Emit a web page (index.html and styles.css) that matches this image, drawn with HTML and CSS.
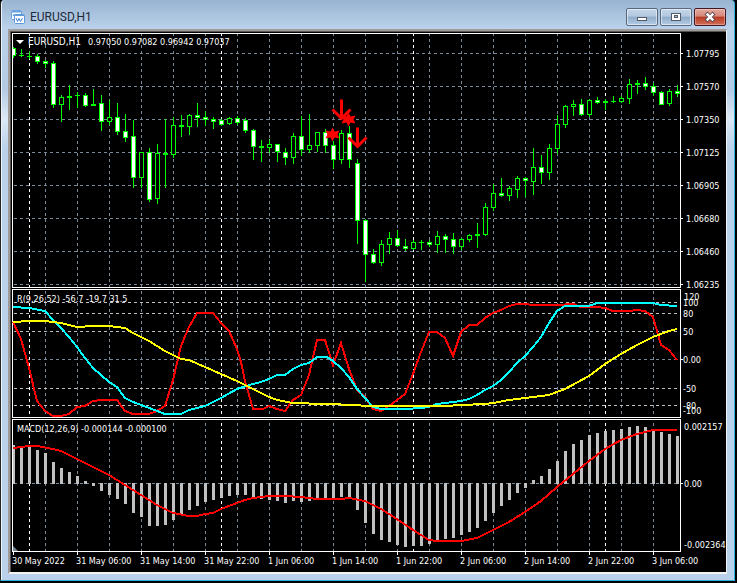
FILE: index.html
```
<!DOCTYPE html>
<html lang="en">
<head>
    <meta charset="UTF-8">
    <meta name="viewport" content="width=device-width, initial-scale=1.0">
    <title>EURUSD,H1</title>
    <link rel="stylesheet" href="styles.css">
</head>
<body>

    <div class="window">
        <header class="titlebar">
            <svg class="app-icon" viewBox="0 0 14 14" width="14" height="14" aria-hidden="true">
                <rect x="0.5" y="0.5" width="10" height="9" rx="1" fill="#f4f9ff" stroke="#6aa3e0"/>
                <path d="M1 1.5h9" stroke="#6aa3e0" stroke-width="2"/>
                <path d="M2 6l1.5-2 1 2" fill="none" stroke="#4a8ad8"/>
                <rect x="3.5" y="4.5" width="10" height="9" rx="1" fill="#fff" stroke="#5b97dc"/>
                <path d="M4 5.5h9" stroke="#5b97dc"/>
                <path d="M5 8l1.5 3.500L8 8.500l1.500 3L11.500 8" fill="none" stroke="#3c7fd2"/>
            </svg>
            <h1 class="title">EURUSD,H1</h1>
            <div class="window-buttons">
                <button type="button" class="win-btn" aria-label="Minimize">
                    <svg viewBox="0 0 12 12" width="12" height="12"><rect x="1.5" y="6.5" width="9" height="3" fill="#fff" stroke="#555c68"/></svg>
                </button>
                <button type="button" class="win-btn" aria-label="Maximize">
                    <svg viewBox="0 0 12 12" width="12" height="12"><rect x="1.5" y="2.5" width="9" height="7" fill="#fff" stroke="#555c68"/><rect x="4.5" y="4.5" width="3" height="2" fill="#9db7d3" stroke="#555c68"/></svg>
                </button>
                <button type="button" class="win-btn close" aria-label="Close">
                    <svg viewBox="0 0 12 12" width="12" height="12"><path d="M2 2l8 8M10 2l-8 8" stroke="#5a4a52" stroke-width="4"/><path d="M2.700 2.700l6.600 6.600M9.300 2.700l-6.600 6.600" stroke="#fff" stroke-width="2.500"/></svg>
                </button>
            </div>
        </header>

        <main class="chart">
            <svg class="pane" viewBox="12 33 714 255">
                <g id="priceGrid"></g>
                <g id="candles"></g>
                <g id="signals"></g>
                <path d="M16 40h8l-4 4z" fill="#fff"/>
                <text class="symbol" x="28" y="45">EURUSD,H1</text>
                <text x="88" y="45">0.97050 0.97082 0.96942 0.97037</text>
                <text x="686" y="57">1.07795</text>
                <text x="686" y="90">1.07570</text>
                <text x="686" y="123">1.07350</text>
                <text x="686" y="156">1.07125</text>
                <text x="686" y="189">1.06905</text>
                <text x="686" y="222">1.06680</text>
                <text x="686" y="255">1.06460</text>
                <text x="686" y="288">1.06235</text>
            </svg>

            <svg class="pane" viewBox="12 289 714 129">
                <g id="rGrid"></g>
                <g id="rLines"></g>
                <text x="17" y="302">R(9,26,52) -56.7 -19.7 31.5</text>
                <text x="684" y="300">120</text>
                <text x="683" y="306">100</text>
                <text x="683" y="317">80</text>
                <text x="683" y="335">50</text>
                <text x="683" y="363">0.00</text>
                <text x="683" y="392">-50</text>
                <text x="683" y="409">-80</text>
                <text x="683" y="414">-100</text>
            </svg>

            <svg class="pane" viewBox="12 419 714 133">
                <g id="macdGrid"></g>
                <g id="macdBars"></g>
                <path d="M13 546l5 5h-5z" fill="#778899"/>
                <text x="17" y="432">MACD(12,26,9) -0.000144 -0.000100</text>
                <text x="684" y="430">0.002157</text>
                <text x="684" y="487">0.00</text>
                <text x="684" y="548">-0.002364</text>
            </svg>

            <ul class="time-axis">
                <li>30 May 2022</li>
                <li>31 May 06:00</li>
                <li>31 May 14:00</li>
                <li>31 May 22:00</li>
                <li>1 Jun 06:00</li>
                <li>1 Jun 14:00</li>
                <li>1 Jun 22:00</li>
                <li>2 Jun 06:00</li>
                <li>2 Jun 14:00</li>
                <li>2 Jun 22:00</li>
                <li>3 Jun 06:00</li>
            </ul>
        </main>
    </div>

    <script src="chart.js"></script>
</body>
</html>
```
FILE: styles.css
```
* {
    box-sizing: border-box;
    margin: 0;
    padding: 0;
}

body {
    background-color: #000;
    font-family: "DejaVu Sans Condensed", "DejaVu Sans", sans-serif;
    padding: 0 2px 2px 0;
}

.window {
    background: linear-gradient(#99b4d1 0, #b9d1ea 28px, #b4cbe6 90px, #dce8f5 118px, #b9d1ea 150px);
    border-left: 1px solid #222;
    border-right: 1px solid #2bb5dc;
    border-bottom: 1px solid #2bb5dc;
    border-radius: 4px 4px 0 0;
    box-shadow: inset 1px 0 0 #eef5fc;
    padding: 0 7px 6px;
}

.titlebar {
    display: flex;
    align-items: center;
    height: 29px;
    padding: 5px 1px 0 3px;
}

.title {
    flex: 1;
    margin-left: 5px;
    font-family: Roboto, sans-serif;
    font-size: 12px;
    font-weight: 400;
    color: #1e2a3a;
}

.window-buttons {
    display: flex;
    gap: 2px;
}

.win-btn {
    display: flex;
    align-items: center;
    justify-content: center;
    width: 32px;
    height: 18px;
    border: 1px solid #59697f;
    border-radius: 2px;
    background: linear-gradient(#c4d6e9 0, #b3c9e0 45%, #8fabc9 50%, #b5cde6 100%);
    box-shadow: inset 0 0 0 1px rgba(255, 255, 255, 0.5);
}

.win-btn.close {
    border-color: #451722;
    background: linear-gradient(#e5a99f 0, #d58879 45%, #b83a22 50%, #d2705a 100%);
    box-shadow: inset 0 0 0 1px rgba(255, 255, 255, 0.3);
}

/* Chart area */
.chart {
    display: flex;
    flex-direction: column;
    gap: 1px;
    background-color: #000;
    border: 2px solid #a09a98;
    border-right: 1px solid #f4f4f4;
    border-bottom-color: #f4f4f4;
    padding: 2px 0 0 2px;
    box-shadow: inset 1px 1px 0 #555;
}

.pane {
    display: block;
    width: 100%;
    height: auto;
    overflow: visible;
}

.pane text {
    fill: #fff;
    font-size: 9px;
}

.pane .symbol {
    font-size: 10px;
}

.grid,
.day,
.level,
.frame {
    fill: none;
    stroke: #778899;
    shape-rendering: crispEdges;
}

.grid,
.day,
.level {
    stroke-dasharray: 3 3;
}

.day {
    stroke: #fff;
}

.level {
    stroke: #c0c0c0;
}

.frame {
    stroke: #fff;
}

.candle {
    fill: #00ff00;
    shape-rendering: crispEdges;
}

.bear {
    fill: #fff;
}

.bull {
    fill: #000;
}

.bear,
.bull {
    shape-rendering: crispEdges;
}

.bar {
    fill: #c0c0c0;
    shape-rendering: crispEdges;
}

.line {
    fill: none;
    stroke-width: 2;
    shape-rendering: crispEdges;
}

.red {
    stroke: #ff0000;
}

.aqua {
    stroke: #00ffff;
}

.yellow {
    stroke: #ffff00;
}

.arrow {
    fill: none;
    stroke: #ff0000;
    stroke-width: 3;
}

.star {
    fill: #ff0000;
}

.time-axis {
    display: grid;
    grid-template-columns: repeat(11, 1fr);
    height: 19px;
    padding-right: 10px;
    list-style: none;
    color: #fff;
    font-size: 9px;
    line-height: 16px;
    white-space: nowrap;
}
```
FILE: chart.js
```
var NS = 'http://www.w3.org/2000/svg';
var FIRST = 13;
var STEP = 8;
var RIGHT = 680;

function add(id, tag, attrs) {
    var el = document.createElementNS(NS, tag);
    for (var key in attrs) {
        el.setAttribute(key, attrs[key]);
    }
    document.getElementById(id).appendChild(el);
}

function rect(id, cls, x, y, w, h) {
    add(id, 'rect', { 'class': cls, x: x, y: y, width: w, height: h });
}

// one pixel strokes sit on pixel centres
function path(id, cls, d) {
    add(id, 'path', { 'class': cls, d: d, transform: 'translate(0.5 0.5)' });
}

function line(id, colour, d) {
    add(id, 'path', { 'class': 'line ' + colour, d: d });
}

// grid lines, day separators, frame and scale ticks of one pane
function drawGrid(id, top, bottom, dashTop, rows, levels) {
    var x;
    for (x = 45; x < RIGHT; x += 32) {
        path(id, 'grid', 'M' + x + ' ' + (dashTop - 0.5) + 'V' + bottom);
    }
    rows.forEach(function (y) {
        path(id, levels.indexOf(y) > -1 ? 'level' : 'grid', 'M13.5 ' + y + 'H' + RIGHT);
    });
    for (x = 29; x < RIGHT; x += 192) {
        path(id, 'day', 'M' + x + ' ' + (dashTop - 0.5) + 'V' + bottom);
    }
    path(id, 'frame', 'M12 ' + top + 'H' + RIGHT + 'V' + bottom + 'H12Z');
    rows.forEach(function (y) {
        if (levels.indexOf(y) === -1) {
            path(id, 'frame', 'M' + RIGHT + ' ' + y + 'h2');
        }
    });
}

// high, body top, body bottom, low, 1 = falling candle
var candles = [
    [47,48,55,57,1],[49,55,55,56,0],[51,56,56,58,0],[54,56,61,63,1],[60,61,63,67,1],[61,63,104,107,1],
    [95,97,104,121,0],[85,96,97,109,0],[92,95,95,107,0],[93,95,105,106,1],[89,104,105,105,0],[95,103,121,130,1],
    [100,117,121,124,0],[103,117,131,134,1],[114,131,137,141,1],[120,136,177,187,1],[152,152,177,187,0],[148,152,199,201,1],
    [144,153,198,203,0],[119,153,154,187,0],[117,125,154,157,0],[115,125,126,136,0],[114,115,126,134,0],[103,115,117,126,1],
    [111,117,119,125,1],[117,119,121,128,1],[119,120,124,125,1],[117,118,123,124,0],[116,118,122,124,1],[118,120,130,132,1],
    [129,130,146,159,1],[140,146,147,161,0],[139,144,147,152,0],[144,144,151,161,1],[148,152,157,164,1],[133,136,157,163,0],
    [116,136,149,155,1],[114,145,149,152,0],[132,132,145,151,0],[129,132,145,152,1],[141,145,159,168,1],[130,133,159,163,0],
    [126,133,159,167,1],[159,163,220,243,1],[219,220,254,281,1],[249,254,262,263,1],[240,244,262,265,0],[232,238,244,253,0],
    [230,238,245,246,1],[239,246,248,250,1],[240,242,248,249,0],[240,242,242,249,0],[240,242,244,246,1],[231,236,244,252,0],
    [234,236,239,252,1],[233,239,246,253,1],[238,239,246,249,0],[234,235,239,241,0],[223,234,235,247,0],[203,207,234,235,0],
    [184,193,207,210,0],[178,193,195,196,1],[186,188,195,200,0],[176,178,189,197,0],[177,178,180,196,1],[148,167,181,194,0],
    [155,167,172,183,1],[144,148,172,179,0],[115,124,148,153,0],[105,106,124,127,0],[100,104,106,115,0],[99,104,114,115,1],
    [99,100,114,116,0],[97,100,102,103,1],[99,101,102,109,0],[96,101,101,102,0],[96,98,101,102,0],[79,84,98,103,0],
    [80,83,84,93,0],[77,83,86,89,1],[83,86,92,95,1],[91,92,104,104,1],[89,91,103,105,0],[85,91,93,96,1]
];

var macd = [
    445,446,447,450,453,462,468,472,476,481,485,490,494,498,503,512,516,525,525,524,519,
    513,509,505,501,499,497,495,494,494,496,498,499,500,502,500,501,500,498,497,498,496,
    498,509,522,533,539,541,544,546,545,545,543,540,538,537,534,531,527,520,512,505,499,
    492,487,480,476,469,461,451,444,440,435,433,431,430,429,427,426,427,430,432,434,436
];

drawGrid('priceGrid', 33, 287, 33, [53, 86, 119, 152, 185, 218, 251, 284], []);
drawGrid('rGrid', 289, 417, 291, [302, 313, 331, 359, 388, 405], [302, 313, 331, 388, 405]);
drawGrid('macdGrid', 419, 551, 423, [483], []);

candles.forEach(function (c, i) {
    var x = FIRST + i * STEP;
    var left = Math.max(x - 2, 13);
    var right = x + 3;
    rect('candles', 'candle', x, c[0], 1, c[3] - c[0] + 1);
    rect('candles', 'candle', left, c[1], right - left, c[2] - c[1] + 1);
    if (c[2] - c[1] > 1) {
        left = Math.max(x - 1, 13);
        rect('candles', c[4] ? 'bear' : 'bull', left, c[1] + 1, x + 2 - left, c[2] - c[1] - 1);
    }
});

[[341, 99], [357, 127]].forEach(function (p) {
    path('signals', 'arrow', 'M' + p[0] + ' ' + p[1] + 'v19m-9-9l9 9l9-9');
});
[[332, 134], [348, 119]].forEach(function (p) {
    path('signals', 'star', 'M' + p[0] + ' ' + (p[1] - 7) + 'l2 4 5-1-2 4 2 4-5-1-2 4-2-4-5 1 2-4-2-4 5 1z');
});

line('rLines', 'red', 'M13 322L21 339 29 368 37 401 45 411 53 416 61 416 69 414 77 407 85 406 93 401 101 400 117 400 125 411 133 414 149 414 157 411 165 406 173 380 181 346 189 327 197 313 213 313 221 323 229 331 237 349 241 362 245 381 253 409 263 409 269 406 277 409 285 411 293 400 301 395 309 375 317 340 325 340 333 365 341 343 349 369 357 390 365 397 373 409 381 411 389 406 397 400 405 394 413 374 421 352 429 332 437 332 445 338 453 356 461 332 469 325 477 325 485 318 493 313 501 310 509 306 517 304 525 304 533 305 557 305 573 304 581 307 597 307 605 308 613 311 629 311 637 310 645 311 653 317 661 345 669 350 677 360');
line('rLines', 'aqua', 'M13 307L29 308 45 311 53 320 61 328 69 337 77 347 85 358 93 368 101 375 109 382 117 387 125 398 133 402 141 405 149 408 157 411 165 414 181 414 189 410 205 406 221 398 237 389 243 387 253 384 261 382 269 379 277 375 285 375 293 369 301 365 309 363 317 357 327 357 333 361 341 368 349 377 357 389 365 398 373 407 381 409 405 409 421 408 429 407 437 404 453 402 461 401 469 399 477 395 485 390 493 386 501 380 509 372 517 363 525 356 533 347 541 337 549 323 557 311 565 306 589 306 597 303 653 303 661 305 677 306');
line('rLines', 'yellow', 'M13 322L29 321 45 321 61 323 77 327 93 326 109 326 125 328 133 333 149 341 165 351 181 359 189 360 205 367 221 374 237 381 245 385 253 389 269 397 277 400 293 403 325 404 357 405 365 406 445 406 461 405 485 404 493 403 509 400 525 398 549 395 557 392 565 389 589 376 605 364 621 354 637 345 653 337 669 331 677 329');

macd.forEach(function (y, i) {
    var x = Math.max(FIRST + i * STEP - 1, 13);
    rect('macdBars', 'bar', x, Math.min(y, 483), FIRST + i * STEP + 2 - x, Math.abs(y - 483) + 1);
});
line('macdBars', 'red', 'M13 448L29 446 37 446 53 449 61 451 77 459 93 467 109 475 125 485 141 495 157 505 173 513 189 516 197 516 205 514 213 513 221 509 237 503 245 500 253 498 269 496 285 496 301 497 317 499 341 499 349 498 365 501 381 509 397 519 413 530 429 540 437 541 461 541 477 538 493 530 509 522 525 512 541 501 557 487 573 474 589 461 605 449 621 440 637 434 653 430 677 430');

// marks above the time labels
for (var t = FIRST; t < RIGHT; t += 64) {
    path('macdGrid', 'frame', 'M' + t + ' 551v3');
}
```
